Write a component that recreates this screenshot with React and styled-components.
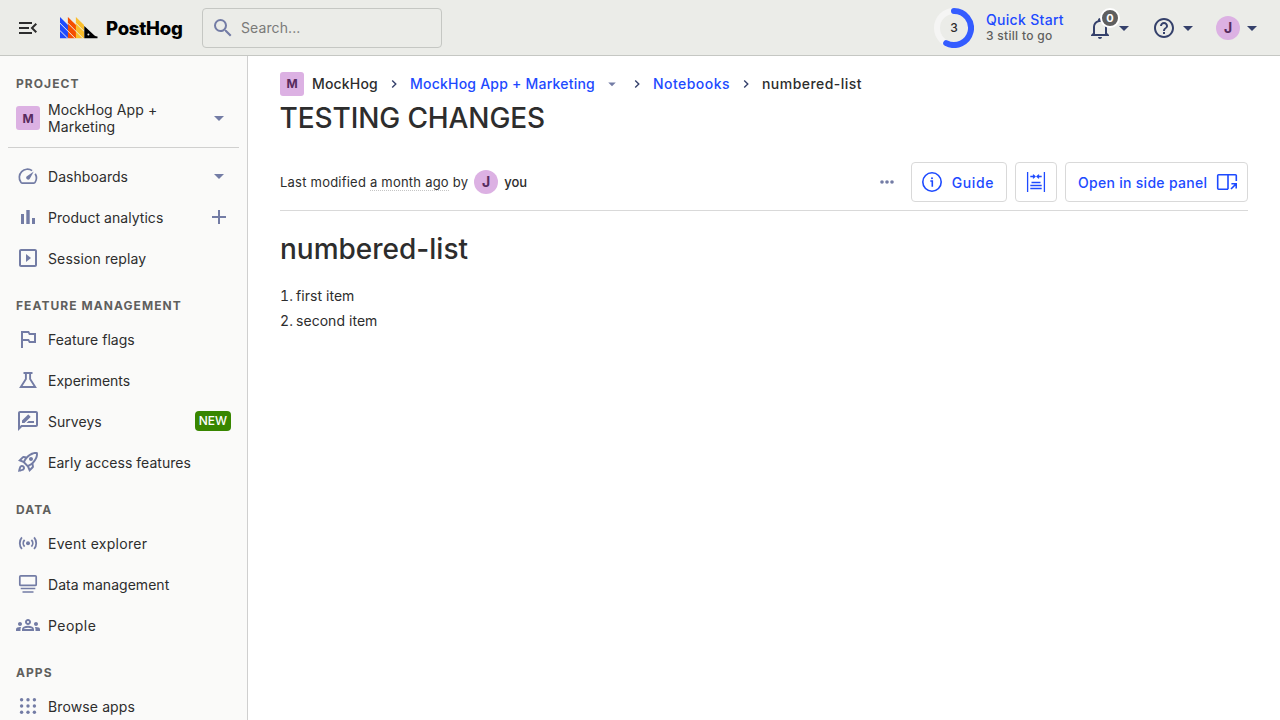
import React from 'react';
import styled, { createGlobalStyle } from 'styled-components';
import {
  MdMenuOpen, MdSearch, MdOutlineSlideshow, MdOutlinedFlag,
  MdOutlineRateReview, MdOutlineRocketLaunch, MdOutlineGroups,
  MdHelpOutline, MdArrowDropDown,
} from 'react-icons/md';

const GlobalStyle = createGlobalStyle`
  * { box-sizing: border-box; }
  body {
    margin: 0; height: 720px; overflow: hidden; background: #fff; color: #2d2d2d;
    font: 400 14px/20px Inter, "Liberation Sans", sans-serif;
  }
  button { font: inherit; color: inherit; background: none; border: 0; padding: 0; }
`;

const Page = styled.div`display: flex; flex-direction: column; height: 720px;`;

const TopBar = styled.header`
  display: flex; align-items: center; flex: none; height: 56px; padding: 0 16px;
  background: #ebece8; border-bottom: 1px solid #c5c7c3; color: #35416b;
`;
const MenuToggle = styled.button`display: flex; color: #2d2d2d; margin-right: 20px;`;
const Brand = styled.div`display: flex; align-items: center; width: 142px; color: #000;`;
const Wordmark = styled.span`
  font: 800 18.5px/24px Inter, sans-serif; letter-spacing: -0.25px; margin-left: 8px; padding-top: 1px; white-space: nowrap;
`;
const SearchBox = styled.label`
  display: flex; align-items: center; gap: 6px; width: 240px; height: 40px; padding: 0 8px;
  border: 1px solid #c5c7c3; border-radius: 4px; color: #737ca5;
`;
const Placeholder = styled.span`color: #7a7a78; letter-spacing: 0.1px;`;
const TopActions = styled.div`display: flex; align-items: center; margin-left: auto;`;
const QuickStart = styled.div`display: flex; align-items: center; gap: 12px; width: 154px;`;
const QuickText = styled.div`padding-bottom: 2px; letter-spacing: 0.3px;`;
const Ring = styled.div`
  display: grid; place-items: center; width: 40px; height: 40px; color: #2d2d2d; font-size: 12px; font-weight: 500;
  > * { grid-area: 1 / 1; }
`;
const QuickTitle = styled.div`font-weight: 500; line-height: 18px; color: #1d4aff; white-space: nowrap;`;
const QuickSub = styled.div`font-size: 12px; font-weight: 500; line-height: 14px; color: #5f5f5d;`;
const Menu = styled.button`
  position: relative; display: flex; align-items: center; width: 48px; margin-right: ${p => p.$after || 0}px;
`;
const Count = styled.span`
  position: absolute; left: 12px; top: -8px; width: 20px; height: 20px; border-radius: 50%;
  border: 2px solid #fff; background: #5f5f5f; color: #fff; font-size: 11px; font-weight: 700; line-height: 16px; text-align: center;
`;
const Lettermark = styled.span`
  display: flex; align-items: center; justify-content: center; flex: none; width: 24px; height: 24px;
  border-radius: ${p => (p.$round ? '50%' : '3px')}; background: #dcb1e3; color: #572b5e;
  font-size: ${p => (p.$round ? 14 : 12)}px; font-weight: 700;
`;

const Body = styled.div`display: flex; flex: 1; min-height: 0;`;
const Sidebar = styled.nav`
  flex: none; width: 248px; padding: 9px 8px 0; overflow: hidden; background: #fafaf9; border-right: 1px solid #cfcfcf;
`;
const SectionTitle = styled.h5`
  margin: 0; padding: ${p => (p.$first ? 11 : 20)}px 8px ${p => (p.$first ? 6 : 5)}px;
  font-size: 12px; line-height: 16px; font-weight: 700; letter-spacing: 1.06px; color: #5f5f5d;
`;
const Item = styled.a`
  display: flex; align-items: center; gap: 8px; height: 40px; padding: 0 8px; margin-bottom: ${p => (p.$last ? 0 : 1)}px;
  line-height: 17px;
`;
const ItemIcon = styled.span`display: flex; flex: none; color: #737ca5;`;
const ItemLabel = styled.span`flex: 1; white-space: nowrap; letter-spacing: ${p => p.$track ?? 0.04}px;`;
const Side = styled.span`display: flex; color: #737ca5;`;
const Divider = styled.hr`height: 1px; border: 0; margin: 9px 0 8px; background: #d0d0cf;`;
const Tag = styled.span`
  height: 20px; padding: 0 4px; border-radius: 4px; background: #388600; color: #fff;
  font-size: 12px; font-weight: 500; line-height: 20px;
`;

const Main = styled.main`flex: 1; padding: 16px 32px 0; min-width: 0;`;
const Crumbs = styled.div`display: flex; align-items: center; height: 24px; font-weight: 500;`;
const Crumb = styled.span`
  color: ${p => (p.$link ? '#1d4aff' : '#2d2d2d')}; margin-left: ${p => p.$before || 0}px;
  letter-spacing: ${p => p.$track || 0}px; white-space: nowrap;
`;
const CrumbArrow = styled.span`display: flex; justify-content: center; flex: none; width: 32px; color: #35416b;`;
const CrumbMenu = styled.span`display: flex; justify-content: center; width: 26px; margin-left: 4px; margin-right: -4px; color: #737ca5;`;
const Title = styled.h1`margin: 4px 0 0; font-size: 28px; line-height: 36px; font-weight: 500; letter-spacing: -0.1px; text-indent: -0.5px;`;
const MetaBar = styled.div`
  display: flex; align-items: center; height: 57px; margin-top: 18px; border-bottom: 1px solid #d9d9d9; font-size: 13px;
`;
const Modified = styled.span`letter-spacing: 0.22px; white-space: nowrap;`;
const Since = styled.span`border-bottom: 1px dotted #c5c5c5;`;
const Author = styled.span`display: flex; align-items: center; gap: 6px; margin-left: 6px; font-weight: 500;`;
const Actions = styled.div`display: flex; align-items: center; gap: 8px; margin-left: auto;`;
const More = styled.button`display: flex; width: 24px; margin-right: 4px; color: #737ca5;`;
const Button = styled.button`
  display: flex; align-items: center; justify-content: ${p => (p.$square ? 'center' : 'space-between')};
  width: ${p => p.$width}px; height: 40px; padding: 0 ${p => (p.$square ? 0 : p.$pad)};
  border: 1px solid #d9d9d9; border-radius: 4px; color: #1d4aff; font-size: 14px; font-weight: 500; white-space: nowrap;
`;
const ButtonLabel = styled.span`padding-top: 1px; letter-spacing: ${p => p.$track}px;`;
const NoteTitle = styled.h1`margin: 20px 0 16px; font-size: 28px; line-height: 36px; font-weight: 500;`;
const List = styled.ol`margin: 0; padding-left: 0; list-style: none; counter-reset: n; line-height: 25px;`;
const ListItem = styled.li`
  display: flex; counter-increment: n; letter-spacing: 0.04px;
  &::before { content: counter(n) '.'; width: 16px; font-variant-numeric: tabular-nums; }
`;

const Logo = () => (
  <svg width="38" height="22" viewBox="0 0 38 22">
    <path fill="#1d4aff" d="M0 0 8 8V21.2H0Z" />
    <path fill="#f54e00" d="M7.9 0 16 8V21.2H7.9Z" />
    <path fill="#f9bd2b" d="M15.9 0 24 8V21.2H15.9Z" />
    <path fill="none" stroke="#ebece8" strokeWidth="1" d="M-.5 5.7 15.5 21.7M-.5 13.1 8 21.6M7.9 6.2 23.4 21.7M15.9 6.2 24.5 14.8" />
    <path fill="#000" d="M24.3 9 34.5 18.6c.8.7 1.8 1 3 1V21.2H24.3Z" />
    <circle cx="28.4" cy="17.4" r="1" fill="#ebece8" />
  </svg>
);
const Gauge = () => (
  <svg width="24" height="24" fill="none" stroke="currentColor" strokeWidth="1.7">
    <path d="M16.1 6.6A8.2 8.2 0 0 0 4.8 18.1c.3.6.7 1 1.3 1h11.8c.6 0 1-.4 1.3-1a8.2 8.2 0 0 0 0-8.4" />
    <path d="M17.8 7.6 13.8 14.8a2 2 0 1 1-3.3-2.3z" fill="currentColor" stroke="none" />
  </svg>
);
const Bell = () => (
  <svg width="24" height="24" fill="currentColor">
    <path d="M10 21h4c0 1.1-.9 2-2 2s-2-.9-2-2M21 19v1H3v-1l2-2v-6c0-3.1 2-5.8 5-6.7V4c0-1.1.9-2 2-2s2 .9 2 2v.3c3 .9 5 3.6 5 6.7v6l2 2M17 11c0-2.8-2.2-5-5-5s-5 2.2-5 5v7h10z" />
  </svg>
);
const Bars = () => (
  <svg width="24" height="24" fill="currentColor"><path d="M5 9h3v10H5zM10.3 5h3.4v14h-3.4zM16 13h3v6h-3z" /></svg>
);
const Flask = () => (
  <svg width="24" height="24" fill="none" stroke="currentColor" strokeWidth="1.9">
    <path d="M7.5 5h9M9.9 5v6L4.8 19h14.4L14.1 11V5" />
  </svg>
);
const Live = () => (
  <svg width="24" height="24" fill="none" stroke="currentColor" strokeWidth="1.8">
    <circle cx="12" cy="12.2" r="2" fill="currentColor" stroke="none" />
    <path d="M5.9 6.4a9 9 0 0 0 0 11.6M18.1 6.4a9 9 0 0 1 0 11.6M8.6 8.8a5 5 0 0 0 0 6.8M15.4 8.8a5 5 0 0 1 0 6.8" />
  </svg>
);
const Stack = () => (
  <svg width="24" height="24" fill="none" stroke="currentColor" strokeWidth="1.7">
    <rect x="3.8" y="3.8" width="16.4" height="9.6" rx="1" /><path d="M4.7 16.5h14.6M6.5 20h11" />
  </svg>
);
const Dots = () => (
  <svg width="24" height="24" fill="currentColor">
    {[5.7, 12, 18.3].flatMap(y => [5.6, 12, 18.4].map(x => <circle key={`${x}-${y}`} cx={x} cy={y} r="1.7" />))}
  </svg>
);
const Plus = () => <svg width="24" height="24" fill="none" stroke="currentColor" strokeWidth="2"><path d="M5 12h14M12 5v14" /></svg>;
const Chevron = () => (
  <svg width="12" height="12" fill="none" stroke="currentColor" strokeWidth="1.4"><path d="m4.2 2.4 3.6 3.6-3.6 3.6" /></svg>
);
const Ellipsis = () => (
  <svg width="24" height="24" fill="currentColor"><circle cx="7" cy="12" r="1.8" /><circle cx="12" cy="12" r="1.8" /><circle cx="17" cy="12" r="1.8" /></svg>
);
const Info = () => (
  <svg width="24" height="24" fill="none" stroke="currentColor" strokeWidth="1.6">
    <circle cx="12" cy="12" r="9.2" /><path d="M10.3 11h2v5.8" /><circle cx="12" cy="8.2" r="1" fill="currentColor" stroke="none" />
  </svg>
);
const Narrow = () => (
  <svg width="24" height="24" fill="none" stroke="currentColor" strokeWidth="1.3">
    <path d="M3.6 2v20M20.4 2v20M7.5 12.5h9M6.3 15.5h11.4M6.3 18.5h11.4M6.3 6.5H11M17.7 6.5H13M9 4.6l2 1.9-2 1.9M15 4.6l-2 1.9 2 1.9" />
  </svg>
);
const SidePanel = () => (
  <svg width="24" height="24" fill="none" stroke="currentColor" strokeWidth="1.6">
    <path d="M13 19.2H3.6a.9.9 0 0 1-.9-.9V5.6c0-.5.4-.9.9-.9h16.8c.5 0 .9.4.9.9V11M13 4.7v14.5M16 19l5-5M16.4 13.8h4.8V18.6" />
  </svg>
);

const sections = [
  [null, [
    ['Dashboards', <Gauge />, <MdArrowDropDown size={24} />],
    ['Product analytics', <Bars />, <Plus />],
    ['Session replay', <MdOutlineSlideshow size={24} />, null, 0.12],
  ]],
  ['FEATURE MANAGEMENT', [
    ['Feature flags', <MdOutlinedFlag size={24} />],
    ['Experiments', <Flask />, null, 0],
    ['Surveys', <MdOutlineRateReview size={24} />, <Tag>NEW</Tag>],
    ['Early access features', <MdOutlineRocketLaunch size={24} />],
  ]],
  ['DATA', [
    ['Event explorer', <Live />, null, 0.28],
    ['Data management', <Stack />],
    ['People', <MdOutlineGroups size={24} />, null, 0.45],
  ]],
  ['APPS', [['Browse apps', <Dots />, null, 0.12]]],
];

export default function App() {
  return (
    <Page>
      <GlobalStyle />
      <TopBar>
        <MenuToggle><MdMenuOpen size={24} /></MenuToggle>
        <Brand><Logo /><Wordmark>PostHog</Wordmark></Brand>
        <SearchBox><MdSearch size={24} /><Placeholder>Search...</Placeholder></SearchBox>
        <TopActions>
          <QuickStart>
            <Ring>
              <svg width="40" height="40" fill="none" strokeWidth="6">
                <circle cx="20" cy="20" r="17" stroke="#f5f5f4" />
                <path d="M20 3A17 17 0 1 1 12.2 35.1" stroke="#345cff" strokeLinecap="round" />
              </svg>
              <span>3</span>
            </Ring>
            <QuickText><QuickTitle>Quick Start</QuickTitle><QuickSub>3 still to go</QuickSub></QuickText>
          </QuickStart>
          <Menu $after={16}><Bell /><Count>0</Count><MdArrowDropDown size={24} /></Menu>
          <Menu $after={16}><MdHelpOutline size={24} /><MdArrowDropDown size={24} /></Menu>
          <Menu><Lettermark $round>J</Lettermark><MdArrowDropDown size={24} /></Menu>
        </TopActions>
      </TopBar>
      <Body>
        <Sidebar>
          <SectionTitle $first>PROJECT</SectionTitle>
          <Item $last>
            <Lettermark>M</Lettermark>
            <ItemLabel $track={0.1}>MockHog App +<br />Marketing</ItemLabel>
            <Side><MdArrowDropDown size={24} /></Side>
          </Item>
          <Divider />
          {sections.map(([title, items], s) => (
            <React.Fragment key={s}>
              {title && <SectionTitle>{title}</SectionTitle>}
              {items.map(([label, icon, side, track], i) => (
                <Item key={label} $last={i === items.length - 1}>
                  <ItemIcon>{icon}</ItemIcon>
                  <ItemLabel $track={track}>{label}</ItemLabel>
                  {side && <Side>{side}</Side>}
                </Item>
              ))}
            </React.Fragment>
          ))}
        </Sidebar>
        <Main>
          <Crumbs>
            <Lettermark>M</Lettermark>
            <Crumb $before={8} $track={0.18}>MockHog</Crumb>
            <CrumbArrow><Chevron /></CrumbArrow>
            <Crumb $link $track={0.22}>MockHog App + Marketing</Crumb>
            <CrumbMenu><MdArrowDropDown size={18} /></CrumbMenu>
            <CrumbArrow><Chevron /></CrumbArrow>
            <Crumb $link $track={0.46}>Notebooks</Crumb>
            <CrumbArrow><Chevron /></CrumbArrow>
            <Crumb $track={0.46}>numbered-list</Crumb>
          </Crumbs>
          <Title>TESTING CHANGES</Title>
          <MetaBar>
            <Modified>Last modified <Since>a month ago</Since> by</Modified>
            <Author><Lettermark $round>J</Lettermark>you</Author>
            <Actions>
              <More><Ellipsis /></More>
              <Button $width={96} $pad="12px 0 8px"><Info /><ButtonLabel $track={0.6}>Guide</ButtonLabel></Button>
              <Button $width={42} $square><Narrow /></Button>
              <Button $width={183} $pad="8px 0 12px"><ButtonLabel $track={0.29}>Open in side panel</ButtonLabel><SidePanel /></Button>
            </Actions>
          </MetaBar>
          <NoteTitle>numbered-list</NoteTitle>
          <List><ListItem>first item</ListItem><ListItem>second item</ListItem></List>
        </Main>
      </Body>
    </Page>
  );
}
